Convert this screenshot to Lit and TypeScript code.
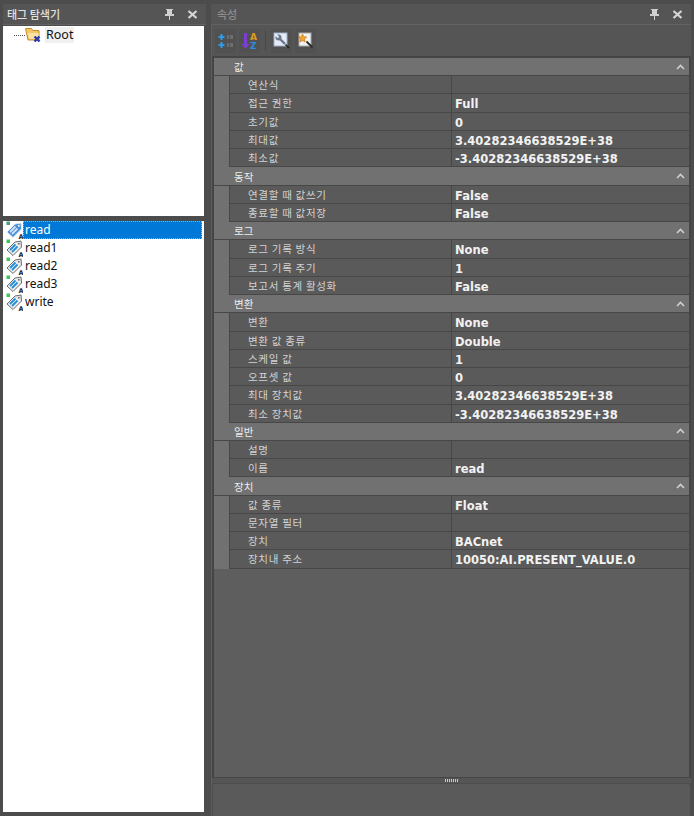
import { LitElement, html, css, svg } from 'lit';
import { customElement } from 'lit/decorators.js';

type Section = { title: string; rows: [string, string][] };

const MAX = '3.40282346638529E+38';
const sections: Section[] = [
  { title: '값', rows: [['연산식', ''], ['접근 권한', 'Full'], ['초기값', '0'], ['최대값', MAX], ['최소값', '-' + MAX]] },
  { title: '동작', rows: [['연결할 때 값쓰기', 'False'], ['종료할 때 값저장', 'False']] },
  { title: '로그', rows: [['로그 기록 방식', 'None'], ['로그 기록 주기', '1'], ['보고서 통계 활성화', 'False']] },
  { title: '변환', rows: [['변환', 'None'], ['변환 값 종류', 'Double'], ['스케일 값', '1'], ['오프셋 값', '0'], ['최대 장치값', MAX], ['최소 장치값', '-' + MAX]] },
  { title: '일반', rows: [['설명', ''], ['이름', 'read']] },
  { title: '장치', rows: [['값 종류', 'Float'], ['문자열 필터', ''], ['장치', 'BACnet'], ['장치내 주소', '10050:AI.PRESENT_VALUE.0']] },
];

const tags = ['read', 'read1', 'read2', 'read3', 'write'];

const pin = html`<svg width="9" height="11" viewBox="0 0 9 11"><path d="M1 0h7v1H7v4h2v2H5v4H4V7H0V5h2V1H1z" fill="#d0d0d0"/></svg>`;
const close = html`<svg width="11" height="9" viewBox="0 0 11 9"><path d="M1.5 1l8 7M9.5 1l-8 7" stroke="#d6d6d6" stroke-width="2.2" fill="none"/></svg>`;
const chevron = html`<svg width="9" height="6" viewBox="0 0 9 6"><path d="M1 5l3.5-3.5L8 5" stroke="#cfcfcf" stroke-width="1.6" fill="none"/></svg>`;

const tagIcon = (selected: boolean) => svg`
  <svg width="17" height="18" viewBox="0 0 17 18">
    <rect x="0.5" y="0.5" width="3.5" height="3.5" fill="${selected ? '#3fa08c' : '#3fc65a'}"/>
    <path d="M1 11l8-8 6-1 .5 6L7 16.5z" fill="${selected ? '#4a8fd6' : '#ececec'}" stroke="${selected ? '#dfeafa' : '#6a6a6a'}" stroke-width="1"/>
    <path d="M4 11l5.5-5.5M6 13l5.5-5.5" stroke="${selected ? '#cfe4fa' : '#1f8fd8'}" stroke-width="1.8"/>
    <circle cx="12.8" cy="4.7" r="1" fill="${selected ? '#fff' : '#777'}"/>
    <text x="12.5" y="17.5" font-family="DejaVu Sans" font-weight="700" font-size="6.5" fill="#1a2a3a">A</text>
  </svg>`;

@customElement('app-root')
export class AppRoot extends LitElement {
  static styles = css`
    :host {
      display: flex;
      width: 694px;
      height: 816px;
      overflow: hidden;
      background: #4c4c4c;
      font-family: "DejaVu Sans", sans-serif;
    }
    .left {
      width: 206px;
      flex: none;
      display: flex;
      flex-direction: column;
      padding: 4px 0 4px 3px;
      box-sizing: border-box;
    }
    .caption {
      height: 21px;
      flex: none;
      display: flex;
      align-items: center;
      gap: 13px;
      background: #555;
      border-bottom: 1px solid #626262;
      box-sizing: border-box;
      padding-right: 8px;
      font-family: "Noto Sans CJK KR", sans-serif;
      font-size: 11px;
    }
    .caption .title { flex: 1; padding-left: 4px; color: #e2e2e2; font-weight: 500; }
    .caption svg { display: block; }
    .left .body {
      flex: 1;
      display: flex;
      flex-direction: column;
      width: 201px;
      margin-top: 1px;
    }
    .tree { height: 190px; flex: none; background: #fff; padding: 1px 0 0 11px; box-sizing: border-box; }
    .splitter { height: 5px; flex: none; background: #4c4c4c; }
    .list { flex: 1; background: #fff; }
    .root { display: flex; align-items: center; height: 16px; font-family: "Noto Sans", sans-serif; font-size: 12.5px; color: #111; }
    .dots { width: 11px; border-top: 1px dotted #555; }
    .root .name { background: #f0f0f0; margin-left: 4px; padding: 0 1px; line-height: 16px; }
    .root svg { display: block; }
    .tag { display: flex; align-items: center; height: 18px; font-family: "Noto Sans", sans-serif; font-size: 12px; color: #111; padding-left: 3px; }
    .tag svg { flex: none; display: block; }
    .tag .name { padding: 0 0 0 2px; line-height: 18px; height: 18px; box-sizing: border-box; }
    .tag.sel .name {
      flex: 1;
      margin-right: 2px;
      background: #0078d7;
      color: #fff;
      outline: 1px dotted #f0a040;
      outline-offset: -1px;
    }

    .right {
      flex: 1;
      min-width: 0;
      display: flex;
      flex-direction: column;
      padding: 4px 3px 0 5px;
      box-sizing: border-box;
    }
    .right .caption .title { color: #8d8d8d; padding-left: 6px; }
    .panel {
      flex: 1;
      display: flex;
      flex-direction: column;
      background: #555;
      border-left: 1px solid #5e5e5e;
      min-height: 0;
    }
    .toolbar { height: 31px; flex: none; display: flex; align-items: center; gap: 3px; padding-left: 3px; box-sizing: border-box; }
    .toolbar svg { display: block; }
    .tool { width: 21px; height: 24px; display: flex; align-items: center; justify-content: center; background: #515151; border-radius: 2px; }
    .sep { width: 1px; height: 20px; background: #484848; margin: 0 2px; }
    .grid {
      height: 722px;
      flex: none;
      box-sizing: border-box;
      background: #5e5e5e;
      border: 2px solid #454545;
      border-bottom-width: 1px;
    }
    .head {
      height: 18.2px;
      box-sizing: border-box;
      display: flex;
      align-items: center;
      background: #717171;
      border-bottom: 1px solid #474747;
      padding: 0 4px 0 20px;
      color: #eee;
      font-family: "Noto Sans CJK KR", sans-serif;
      font-size: 10.5px;
    }
    .head .t { flex: 1; }
    .row {
      height: 18.25px;
      box-sizing: border-box;
      display: flex;
      margin-left: 15px;
      background: #5a5a5a;
      border-bottom: 1px solid #474747;
      border-left: 1px solid #474747;
    }
    .gutter { background: #717171; }
    .label {
      width: 222px;
      flex: none;
      box-sizing: border-box;
      padding-left: 18px;
      color: #d2d2d2;
      border-right: 1px solid #474747;
      font-family: "Noto Sans CJK KR", sans-serif;
      font-size: 10.5px;
      line-height: 17px;
      letter-spacing: 0.7px;
      white-space: nowrap;
    }
    .value {
      flex: 1;
      padding-left: 3px;
      padding-top: 1px;
      box-sizing: border-box;
      color: #f2f2f2;
      font-weight: 700;
      font-size: 11.5px;
      line-height: 18px;
      white-space: nowrap;
      overflow: hidden;
    }
    .grip { height: 5px; flex: none; display: flex; justify-content: center; align-items: center; gap: 1px; }
    .grip i { width: 1px; height: 3px; background: #c8c8c8; }
    .bottom {
      flex: 1;
      background: #5a5a5a;
      border: 1px solid #4c4c4c;
      border-bottom: none;
      border-radius: 3px 3px 0 0;
    }
  `;

  render() {
    return html`
      <div class="left">
        <div class="caption"><span class="title">태그 탐색기</span>${pin}${close}</div>
        <div class="body">
          <div class="tree">
            <div class="root">
              <span class="dots"></span>
              <svg width="16" height="15" viewBox="0 0 16 15">
                <path d="M0.5 0.5h6l1.500 2h6v9.500H3z" fill="#f4c766" stroke="#c98a2a"/>
                <path d="M2.5 5h11v6h-9z" fill="#fbe3a8"/>
                <path d="M9.5 8.5l5 5M14.5 8.5l-5 5" stroke="#2a3aa8" stroke-width="2.4"/>
              </svg>
              <span class="name">Root</span>
            </div>
          </div>
          <div class="splitter"></div>
          <div class="list">
            ${tags.map((t, i) => html`
              <div class="tag ${i === 0 ? 'sel' : ''}">${tagIcon(i === 0)}<span class="name">${t}</span></div>`)}
          </div>
        </div>
      </div>
      <div class="right">
        <div class="caption"><span class="title">속성</span>${pin}${close}</div>
        <div class="panel">
          <div class="toolbar">
            <div class="tool">
              <svg width="16" height="16" viewBox="0 0 16 16">
                <path d="M3.5 1v6M.5 4h6M3.500 9v6M.5 12h6" stroke="#2f9bea" stroke-width="2"/>
                <path d="M9 3h2M12 3h3M9 5h2M12 5h3M9 11h2M12 11h3M9 13h2M12 13h3" stroke="#8c8c8c" stroke-width="1"/>
              </svg>
            </div>
            <div class="tool">
              <svg width="17" height="18" viewBox="0 0 17 18">
                <path d="M3 1h3v11h2.5l-4 5-4-5H3z" fill="#7a3fd0"/>
                <text x="9" y="8" font-family="DejaVu Sans" font-weight="700" font-size="9" fill="#e09a1c">A</text>
                <text x="9" y="17" font-family="DejaVu Sans" font-weight="700" font-size="9" fill="#2a8fe0">Z</text>
              </svg>
            </div>
            <div class="sep"></div>
            <div class="tool">
              <svg width="17" height="17" viewBox="0 0 17 17">
                <rect x="1" y="1" width="13" height="13" fill="#e4ebf6" stroke="#9fb0cc"/>
                <circle cx="5.5" cy="5.5" r="3" fill="#6c7888"/>
                <path d="M2.500 2.500l3 3" stroke="#e4ebf6" stroke-width="2"/>
                <path d="M6 6l6 6" stroke="#6c7888" stroke-width="2.400"/>
                <path d="M12.5 12.5l3.500 3.500" stroke="#222" stroke-width="1.600"/>
              </svg>
            </div>
            <div class="tool">
              <svg width="17" height="17" viewBox="0 0 17 17">
                <rect x="2" y="1" width="12" height="13" fill="#f2f2f2" stroke="#a8a8a8"/>
                <path d="M5.5 2l1.300 2.700 2.900.4-2.100 2 .5 2.900-2.600-1.400-2.600 1.400.5-2.900-2.100-2 2.900-.4z" fill="#f0a52a" stroke="#b86a10" stroke-width=".6"/>
                <path d="M9.5 9.5l6 6" stroke="#2a2a2a" stroke-width="1.800"/>
              </svg>
            </div>
          </div>
          <div class="grid">
            ${sections.map((s) => html`
              <div class="head"><span class="t">${s.title}</span>${chevron}</div>
              <div class="gutter">
                ${s.rows.map(([k, v]) => html`
                  <div class="row"><div class="label">${k}</div><div class="value">${v}</div></div>`)}
              </div>`)}
          </div>
          <div class="grip">${[0, 1, 2, 3, 4, 5, 6].map(() => html`<i></i>`)}</div>
          <div class="bottom"></div>
        </div>
      </div>
    `;
  }
}
